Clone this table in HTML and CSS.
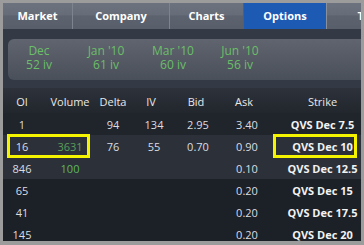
FILE: index.html
```html
<!DOCTYPE html>
<html>
<head>
<meta charset="utf-8">
<link rel="stylesheet" href="styles.css">
</head>
<body>
<div class="frame">
  <div class="app">
    <nav class="tabs">
      <div class="tab t-market">Market</div>
      <div class="tab t-company">Company</div>
      <div class="tab t-charts">Charts</div>
      <div class="tab t-options active">Options</div>
      <div class="tab t-more">Trades</div>
    </nav>
    <section class="expiries">
      <div class="panel">
        <div class="exp"><span>Dec</span><span>52 iv</span></div>
        <div class="exp"><span>Jan '10</span><span>61 iv</span></div>
        <div class="exp"><span>Mar '10</span><span>60 iv</span></div>
        <div class="exp"><span>Jun '10</span><span>56 iv</span></div>
      </div>
    </section>
    <div class="row head">
      <div>OI</div><div>Volume</div><div>Delta</div><div class="h-iv">IV</div><div class="h-bid">Bid</div><div class="h-ask">Ask</div><div class="strike-h">Strike</div>
    </div>
    <div class="body">
      <div class="row dark">
        <div>1</div><div class="vol"></div><div>94</div><div>134</div><div>2.95</div><div>3.40</div><div class="strike">QVS Dec 7.5</div>
      </div>
      <div class="row light">
        <div>16</div><div class="vol dim">3631</div><div>76</div><div>55</div><div>0.70</div><div>0.90</div><div class="strike">QVS Dec 10</div>
      </div>
      <div class="row light">
        <div>846</div><div class="vol">100</div><div></div><div></div><div></div><div>0.10</div><div class="strike">QVS Dec 12.5</div>
      </div>
      <div class="row darker">
        <div>65</div><div class="vol"></div><div></div><div></div><div></div><div>0.20</div><div class="strike">QVS Dec 15</div>
      </div>
      <div class="row darker">
        <div>41</div><div class="vol"></div><div></div><div></div><div></div><div>0.20</div><div class="strike">QVS Dec 17.5</div>
      </div>
      <div class="row darker">
        <div>145</div><div class="vol"></div><div></div><div></div><div></div><div>0.20</div><div class="strike">QVS Dec 20</div>
      </div>
      <div class="mark mark-vol"></div>
      <div class="mark mark-strike"></div>
    </div>
  </div>
</div>
</body>
</html>
```

FILE: styles.css
```css
* { box-sizing: border-box; }
html, body { margin: 0; padding: 0; }
body {
  background: #9c9c9c;
  font-family: "Open Sans", "DejaVu Sans", sans-serif;
  font-size: 11px;
  width: 364px;
  height: 245px;
  overflow: hidden;
}
.frame {
  padding: 3px 3px 4px 3px;
  height: 245px;
}
.app {
  width: 358px;
  height: 238px;
  overflow: hidden;
  background: #1c2027;
}
.tabs {
  display: flex;
  height: 26px;
  background: linear-gradient(#6d737e 0%, #676d78 45%, #5d636e 50%, #585f6a 100%);
  overflow: hidden;
}
.tab {
  flex: none;
  color: #ffffff;
  font-weight: bold;
  font-size: 11px;
  line-height: 26px;
  text-align: center;
  border-right: 1px solid #7e848e;
  white-space: nowrap;
}
.t-market { width: 70px; }
.t-company { width: 97px; }
.t-charts { width: 73px; border-right: none; }
.t-options { width: 84px; }
.t-more { width: 98px; border-right: none; }
.tab.active {
  background: #1d5ab3;
  border-left: 1px solid #3a62a0;
  border-right: 1px solid #8a909a;
}
.expiries {
  background: #343a45;
  padding: 10px 0 8px 5px;
  height: 59px;
}
.panel {
  height: 41px;
  margin-right: -12px;
  border-radius: 6px;
  background: linear-gradient(#5f646e, #4a505a);
  display: flex;
  gap: 11px;
  padding: 5px 0 0 3px;
}
.exp {
  width: 56px;
  display: flex;
  flex-direction: column;
  align-items: center;
  color: #6bbf68;
  font-size: 12px;
  line-height: 14px;
  white-space: nowrap;
}
.row {
  display: grid;
  grid-template-columns: 38px 58px 28px 54px 34px 64px 1fr;
  height: 22px;
  align-items: center;
  text-align: center;
  color: #dadde2;
  white-space: nowrap;
}
.row.head {
  height: 25px;
  background: linear-gradient(#2d323b, #22262d);
  color: #e8e8e8;
  padding-top: 1px;
}
.h-iv { padding-right: 6px; }
.h-bid { padding-right: 4px; }
.h-ask { padding-right: 6px; }
.strike, .strike-h { padding-left: 5px; }
.strike { font-weight: bold; color: #f2f2f2; }
.row.dark { background: #20242b; }
.row.light { background: #2c3139; }
.row.darker { background: #1c2027; }
.vol { color: #5fb85c; }
.vol.dim { color: #5a9f5a; }
.body { position: relative; }
.mark {
  position: absolute;
  border: 3px solid #f4f400;
  height: 24px;
  top: 21px;
}
.mark-vol { left: 4px; width: 83px; }
.mark-strike { left: 270px; width: 84px; }
```
